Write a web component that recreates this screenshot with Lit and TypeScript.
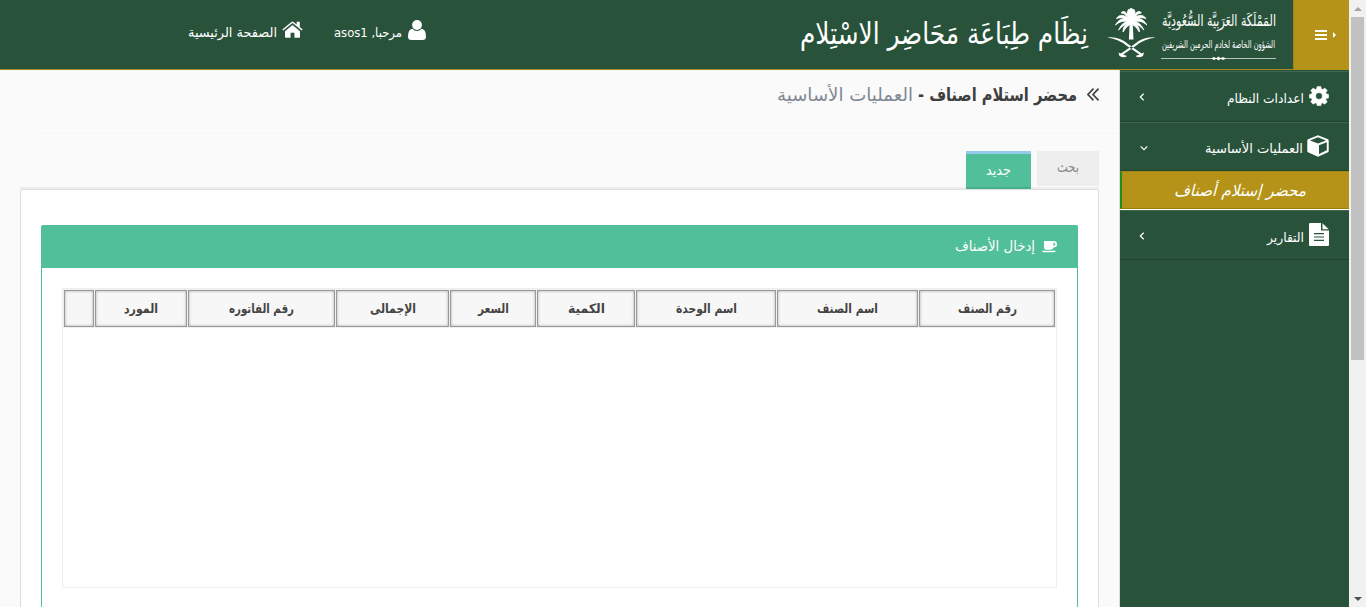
import { LitElement, html, css, svg } from "lit";
import { customElement, property } from "lit/decorators.js";
import { styleMap } from "lit/directives/style-map.js";

/** One line of text drawn at a fixed width. */
@customElement("fit-text")
class FitText extends LitElement {
  @property() text = "";
  @property({ type: Number }) width = 60;
  static styles = css`
    :host { display: inline-block; flex: none; }
    svg { display: block; height: 1.6em; overflow: visible; }
    text { fill: currentColor; font: inherit; direction: rtl; text-anchor: middle; }
  `;
  render() {
    return html`<svg style=${styleMap({ width: `${this.width}px` })}>
      <text x="50%" y="1.15em" textLength=${this.width} lengthAdjust="spacingAndGlyphs">${this.text}</text>
    </svg>`;
  }
}

const gear = svg`<svg class="ic" width="20" height="20" viewBox="0 0 20 20"><path fill="#fff" stroke="#fff" stroke-width=".4" stroke-linejoin="round" fill-rule="evenodd" d="M8.100 0.500h3.800l.5 2.300 1.300.6 2.100-1.400 2.500 2.500-1.400 2.100.6 1.300 2.200.5v3.500l-2.200.5-.6 1.300 1.400 2.100-2.500 2.500-2.100-1.400-1.300.6-.5 2.300H8.100l-.5-2.300-1.300-.6-2.100 1.400-2.500-2.500 1.400-2.100-.6-1.300-2.200-.5V8.400l2.200-.5.6-1.300-1.400-2.100 2.500-2.500 2.100 1.400 1.300-.6zM10 6.700a3.300 3.300 0 1 0 0 6.600a3.300 3.300 0 0 0 0-6.600z"/></svg>`;
const cube = svg`<svg class="ic" width="22" height="22" viewBox="0 0 22 22"><path fill="#fff" fill-rule="evenodd" d="M11 .3 21 4.200q.7.4.7 1.200v10.600q0 .8-.7 1.200L11.600 21.600q-.6.300-1.200 0L1 17.200q-.7-.4-.7-1.200V5.400q0-.8.7-1.200zM11 2.300 3 5.400 11 8.500 19 5.400zM12 10.300V19l7.800-3.700V7.200z"/></svg>`;
const file = svg`<svg class="ic" width="20" height="23" viewBox="0 0 20 23"><path fill="#fff" fill-rule="evenodd" d="M1 0H12V7.500H20V22Q20 23 19 23H1Q0 23 0 22V1Q0 0 1 0zM5 10v1.200H15V10zM5 13.400v1.200H15v-1.200zM5 16.800V18H15v-1.200z"/><path fill="#fff" d="M13.500 0.300 19.700 6.200H13.500z"/></svg>`;
const user = svg`<svg class="ic" width="18" height="20" viewBox="0 0 18 20"><circle cx="9" cy="5" r="4.900" fill="#fff"/><path fill="#fff" d="M4.400 8.700Q6.300 10.900 9 10.900T13.600 8.700Q18 9.400 18 16.500 18 20 14.600 20H3.400Q0 20 0 16.500 0 9.400 4.400 8.700z"/></svg>`;
const home = svg`<svg class="ic" width="21" height="17" viewBox="0 0 21 17"><path fill="#fff" d="M10.500 4 18 10.200V16q0 .8-.8.8H12.400V11.700H8.600V16.800H3.800Q3 16.800 3 16V10.200z"/><path fill="#fff" d="M.3 8.500 9.500.9q1-.7 2 0L14.700 3.500V.8H17.800V6.100L20.700 8.500 19.800 9.600 10.500 2.100 1.200 9.600z"/></svg>`;
const cup = svg`<svg class="ic" width="15" height="12" viewBox="0 0 15 12"><path fill="#fff" fill-rule="evenodd" d="M2 0h9.500Q15 0 15 3.300T11.500 6.600Q11 8.700 8.700 8.700H4.500Q2 8.700 2 6.500zM11.500 1.600V5Q13.300 5 13.300 3.300T11.500 1.600zM0 9.700H13.800Q13.500 11.300 12 11.300H1.800Q.3 11.300 0 9.700z"/></svg>`;
const left = svg`<svg width="6" height="8" viewBox="0 0 6 8"><path d="M4.700 .7 1.300 4l3.400 3.300" fill="none" stroke="#fff" stroke-width="1.200"/></svg>`;
const down = svg`<svg width="8" height="6" viewBox="0 0 8 6"><path d="M.7 1.300 4 4.700 7.300 1.300" fill="none" stroke="#fff" stroke-width="1.200"/></svg>`;

const frond = "M24 14C20 9 13 9 8.500 17C13 13 18 12 24 15z";
const emblem = svg`<svg class="emblem" width="49" height="51" viewBox="0 0 49 51" fill="#fff">
  <path d="M22.800 13h2.800l.9 18.500h-4.600z"/>
  <g stroke="#fff" stroke-width=".9">
  <path d="${frond}"/><path d="${frond}" transform="matrix(-1 0 0 1 48.400 0)"/>
  <path d="M24 13C18 6 12 6 9.500 10.500 15 8.500 19 10 24 15zM24 13C30 6 36 6 38.900 10.500 33.400 8.500 29.400 10 24.400 15z"/>
  <path d="M24 13C20 3 16 2 14 5 18 5 20 8 24 15zM24.400 13C28.400 3 32.400 2 34.400 5 30.400 5 28.400 8 24.400 15z"/>
  <path d="M24.200 14Q18.500 5 21.500 1.500 22.500 2 24.200 0 26 2 27 1.500 30 5 24.200 14z"/>
  <path d="M24 14Q16 12 11.500 22 16 17 19 16.500 15.500 20 16 24 19 18 24 16zM24.400 14Q32.400 12 36.900 22 32.400 17 29.400 16.500 32.900 20 32.400 24 29.400 18 24.400 16z"/>
  </g>
  <path d="M0 29.500Q12 28 21 36L36 46.500 35 48.300 20 38Q11 30.500 0 29.500zM48.600 29.500Q36.600 28 27.600 36L12.600 46.500 13.600 48.300 28.600 38Q37.600 30.500 48.600 29.500z"/>
  <path d="M11.500 44.500 12.500 48Q17 50.500 20 48 17 47 15 46zM37 44.500 36 48Q31.500 50.500 28.500 48 31.500 47 33.500 46z"/>
</svg>`;

const columns = [
  { label: "رقم الصنف", cell: 137, text: 59 },
  { label: "اسم الصنف", cell: 142, text: 61 },
  { label: "اسم الوحدة", cell: 141, text: 61 },
  { label: "الكمية", cell: 99, text: 37 },
  { label: "السعر", cell: 87, text: 31 },
  { label: "الإجمالى", cell: 114, text: 46 },
  { label: "رقم الفاتوره", cell: 148, text: 65 },
  { label: "المورد", cell: 93, text: 34 },
  { label: "", cell: 31, text: 0 },
];

@customElement("app-root")
class AppRoot extends LitElement {
  static styles = css`
    :host { display: block; height: 607px; overflow: hidden; direction: rtl; font: 13px "DejaVu Sans Condensed", "DejaVu Sans", sans-serif; color: #333; }
    * { box-sizing: border-box; }
    svg { display: block; flex: none; }
    .frame { direction: ltr; display: grid; grid-template-columns: 1349px 17px; height: 607px; }
    .page { direction: rtl; display: flex; flex-direction: column; background: #fafafa; min-width: 0; }
    .top { height: 70px; flex: none; display: flex; background: #29523b; border-bottom: 1px solid #a98c20; color: #fff; }
    .toggle { width: 56px; height: 70px; background: #b59318; border-left: 1px solid #9d8122; padding: 29px 13px 0 0; display: flex; gap: 6px; align-items: flex-start; }
    .org { width: 117px; margin-right: 16px; padding-top: 8px; display: flex; flex-direction: column; align-items: center; }
    .org .l1 { font-size: 16px; height: 27px; }
    .org .l2 { font-size: 11px; height: 20px; -webkit-text-stroke: .3px #fff; }
    .org svg { margin-top: 1px; }
    .emblem { margin: 8px 4px 0 0; }
    .system { margin: 9px 19px 0 0; font-size: 30px; height: 48px; -webkit-text-stroke: .5px #fff; }
    .account { margin: 20px 374px 0 0; display: flex; gap: 6px; height: 30px; width: 92px; }
    .homelink { margin: 20px 31px 0 0; display: flex; gap: 5px; height: 30px; }
    .account fit-text, .homelink fit-text { margin-top: 2px; }
    .homelink .ic { margin-top: 1px; }
    .body { flex: 1; display: flex; min-height: 0; }
    .side { width: 230px; flex: none; background: #29523b; border-left: 1px solid #dcdcdc; color: #fff; }
    .item { height: 51px; display: flex; border-top: 1px solid #3e6650; padding: 0 20px; }
    .item .ic { margin-left: 5px; }
    .item .arrow { margin-right: auto; }
    .i1 { height: 52px; border-top: 0; box-shadow: inset 0 1px #29523b, inset 0 2px #3e6650; border-bottom: 1px solid #21442f; padding-left: 19px; }
    .i1 .ic { margin-top: 16px; }
    .i1 fit-text { margin-top: 18px; } .i1 .arrow { margin-top: 23px; }
    .i2 { height: 49px; border-bottom: 1px solid #21442f; }
    .i2 .ic { margin: 12px 0 0 4px; }
    .i2 fit-text { margin-top: 15px; } .i2 .arrow { margin-top: 22px; }
    .i3 { height: 50px; border-bottom: 1px solid #21442f; padding-left: 19px; }
    .i3 .ic { margin-top: 12px; }
    .i3 fit-text { margin-top: 16px; } .i3 .arrow { margin-top: 21px; }
    .active { height: 38px; background: #b59318; border-left: 2px solid #228b22; border-top: 1px solid #a58616; border-bottom: 1px solid #a07d08; box-shadow: 0 1px #fff; margin-bottom: 1px; padding: 6px 43px 0 0; font-size: 16px; font-style: italic; }
    .main { flex: 1; min-width: 0; padding: 0 20px; display: flex; flex-direction: column; }
    .title { height: 61px; margin: 0 -20px 0 20px; padding: 10px 20px 0 0; border-bottom: 1px solid #fff; display: flex; flex: none; font-size: 18px; }
    .title svg { margin: 8px 0 0 10px; }
    .title .strong { font-weight: bold; color: #3f3f3f; }
    .title .light { color: #7f8893; margin-right: 5px; }
    .tabs { height: 58px; padding-top: 20px; flex: none; display: flex; align-items: flex-start; border-bottom: 2px solid #eee; }
    .tab { display: flex; justify-content: center; font-size: 14px; }
    .search { width: 62px; height: 35px; background: #eee; color: #888; padding-top: 5px; margin-left: 6px; }
    .new { width: 65px; height: 38px; background: #52bf9b; border-top: 3px solid #93cbe8; border-bottom: 2px solid #45b08c; color: #fff; padding-top: 5px; }
    .card { flex: 1; min-height: 0; background: #fff; border: 1px solid #ddd; border-bottom: 0; padding: 35px 20px 0; border-radius: 2px 2px 0 0; }
    .panel { height: 100%; border: 1px solid #52bf9b; border-bottom: 0; border-radius: 2px 2px 0 0; }
    .head { height: 42px; background: #52bf9b; color: #fff; display: flex; gap: 7px; padding: 9px 20px 0 0; font-size: 14px; }
    .head .ic { margin-top: 6px; }
    .grid { margin: 20px 20px 0; height: 300px; border: 1px solid #eee; }
    .row { height: 39px; background: #f0f0f0; display: flex; padding: 1px; }
    .th { height: 37px; flex: none; display: flex; justify-content: center; padding-top: 7px; font-weight: bold; color: #444; background: #f7f7f7; border: 1px solid #999; box-shadow: inset 0 0 3px #aaa; margin-left: 1px; }
    .scroll { background: #f1f1f1; display: flex; flex-direction: column; align-items: center; padding: 7px 0 6px; }
    .thumb { width: 13px; height: 343px; background: #c1c1c1; margin: 6px 0 auto; }
  `;

  render() {
    return html`<div class="frame">
      <div class="page">
        <header class="top">
          <div class="toggle">
            <svg width="3" height="12"><path d="M0 3 3 6 0 9z" fill="#fff"/></svg>
            <svg width="12" height="12"><path d="M0 1h12v2H0zM0 5h12v2H0zM0 9h12v2H0z" fill="#fff"/></svg>
          </div>
          <div class="org">
            <fit-text class="l1" text="المَمْلَكَة العَرَبِيَّة السُّعُودِيَّة" width="114"></fit-text>
            <fit-text class="l2" text="الشؤون الخاصة لخادم الحرمين الشريفين" width="113"></fit-text>
            <svg width="115" height="6"><path d="M0 2.500H115" stroke="#b5c5bb"/><path d="M50 2.500 53 1 56 2.500 53 4zM55 2.500 57.500 .5 60 2.500 57.500 4.500zM59 2.500 62 1 65 2.500 62 4z" fill="#fff"/></svg>
          </div>
          ${emblem}
          <fit-text class="system" text="نِظَام طِبَاعَة مَحَاضِر الاسْتِلام" width="288"></fit-text>
          <div class="account">${user}<fit-text text="مرحبا, asos1" width="68"></fit-text></div>
          <div class="homelink">${home}<fit-text text="الصفحة الرئيسية" width="89"></fit-text></div>
        </header>
        <div class="body">
          <nav class="side">
            <div class="item i1">${gear}<fit-text text="اعدادات النظام" width="77"></fit-text><span class="arrow">${left}</span></div>
            <div class="item i2">${cube}<fit-text text="العمليات الأساسية" width="98"></fit-text><span class="arrow">${down}</span></div>
            <div class="active"><fit-text text="محضر إستلام أصناف" width="132"></fit-text></div>
            <div class="item i3">${file}<fit-text text="التقارير" width="37"></fit-text><span class="arrow">${left}</span></div>
          </nav>
          <main class="main">
            <div class="title">
              <svg width="12" height="13"><path d="M6.500.7 1 6.500l5.500 5.800M11.500.7 6 6.500l5.500 5.800" fill="none" stroke="#444" stroke-width="1.700"/></svg>
              <fit-text class="strong" text="محضر استلام اصناف -" width="159"></fit-text>
              <fit-text class="light" text="العمليات الأساسية" width="136"></fit-text>
            </div>
            <div class="tabs">
              <div class="tab search"><fit-text text="بحث" width="22"></fit-text></div>
              <div class="tab new"><fit-text text="جديد" width="25"></fit-text></div>
            </div>
            <section class="card">
              <div class="panel">
                <div class="head">${cup}<fit-text text="إدخال الأصناف" width="80"></fit-text></div>
                <div class="grid"><div class="row">
                  ${columns.map((c) => html`<div class="th" style=${styleMap({ width: `${c.cell - 1}px` })}>${c.text ? html`<fit-text text=${c.label} width=${c.text}></fit-text>` : ""}</div>`)}
                </div></div>
              </div>
            </section>
          </main>
        </div>
      </div>
      <div class="scroll">
        <svg width="8" height="4"><path d="M0 4 4 0 8 4z" fill="#a3a3a3"/></svg>
        <div class="thumb"></div>
        <svg width="8" height="4"><path d="M0 0 4 4 8 0z" fill="#505050"/></svg>
      </div>
    </div>`;
  }
}
